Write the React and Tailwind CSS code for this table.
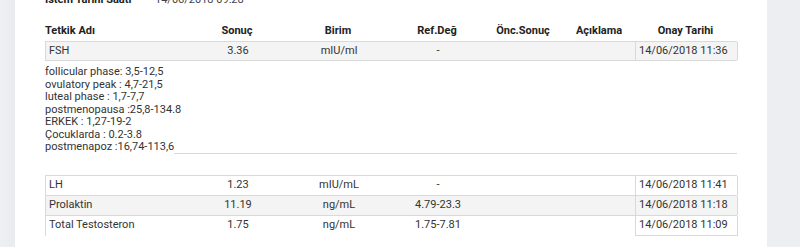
export default function App() {
  const cols = "grid grid-cols-[145px_94px_108px_90px_82px_70px_103px]";
  const notes = [
    "follicular phase: 3,5-12,5",
    "ovulatory peak : 4,7-21,5",
    "luteal phase : 1,7-7,7",
    "postmenopausa :25,8-134.8",
    "ERKEK : 1,27-19-2",
    "Çocuklarda : 0.2-3.8",
  ];
  const rows = [
    { name: "LH", val: "1.23", unit: "mIU/mL", ref: "-", date: "14/06/2018 11:41", gray: false },
    { name: "Prolaktin", val: "11.19", unit: "ng/mL", ref: "4.79-23.3", date: "14/06/2018 11:18", gray: true },
    { name: "Total Testosteron", val: "1.75", unit: "ng/mL", ref: "1.75-7.81", date: "14/06/2018 11:09", gray: false },
  ];
  return (
    <div className="flex w-[800px] h-[247px] overflow-hidden bg-[#eceef1] font-['Roboto',sans-serif] text-[11px] text-[#333]">
      <div className="w-[15px] shrink-0 bg-gradient-to-r from-[#eef0f3] to-[#e9ecef]" />
      <div className="w-[752px] shrink-0 bg-white pl-[30px]">
        <div className="mt-[-6px] h-[12px] leading-[12px] flex">
          <span className="w-[110px] font-bold text-[#222]">İstem Tarihi Saati</span>
          <span className="text-[#444]">14/06/2018 09:28</span>
        </div>
        <div className={`${cols} w-[692px] mt-[15px] h-[20px] items-center font-bold text-[#222]`}>
          <div>Tetkik Adı</div>
          <div className="text-center">Sonuç</div>
          <div className="text-center">Birim</div>
          <div className="text-center">Ref.Değ</div>
          <div className="text-center">Önc.Sonuç</div>
          <div className="text-center">Açıklama</div>
          <div className="text-center">Onay Tarihi</div>
        </div>
        <div className={`${cols} w-[692px] h-[20px] items-stretch border-y border-l border-[#d9d9d9] bg-[#f4f4f4]`}>
          <div className="pl-[3px] flex items-center">FSH</div>
          <div className="flex items-center justify-center">3.36</div>
          <div className="flex items-center justify-center">mIU/ml</div>
          <div className="flex items-center justify-center">-</div>
          <div />
          <div />
          <div className="flex items-center pl-[3px] border-x border-[#d9d9d9]">14/06/2018 11:36</div>
        </div>
        <div className="w-[692px] pt-[5px] leading-[12.5px]">
          {notes.map((n) => (
            <div key={n}>{n}</div>
          ))}
          <div className="flex">
            <span>postmenapoz :16,74-113,6</span>
            <div className="flex-1 h-[12.5px] mb-[2px] border-b border-[#d9d9d9]" />
          </div>
        </div>
        <div className="w-[692px] mt-[19px] border-t border-[#d9d9d9]">
          {rows.map((r, i) => (
            <div
              key={r.name}
              className={`${cols} h-[20px] border-l border-[#d9d9d9] ${i < rows.length - 1 ? "border-b" : ""} ${r.gray ? "bg-[#f4f4f4]" : ""}`}
            >
              <div className="pl-[3px] flex items-center">{r.name}</div>
              <div className="flex items-center justify-center">{r.val}</div>
              <div className="flex items-center justify-center">{r.unit}</div>
              <div className="flex items-center justify-center">{r.ref}</div>
              <div />
              <div />
              <div className={`flex items-center pl-[3px] border-x border-[#d9d9d9] ${i === rows.length - 1 ? "border-b" : ""}`}>{r.date}</div>
            </div>
          ))}
        </div>
      </div>
      <div className="flex-1 bg-[#eceef1]" />
    </div>
  );
}
